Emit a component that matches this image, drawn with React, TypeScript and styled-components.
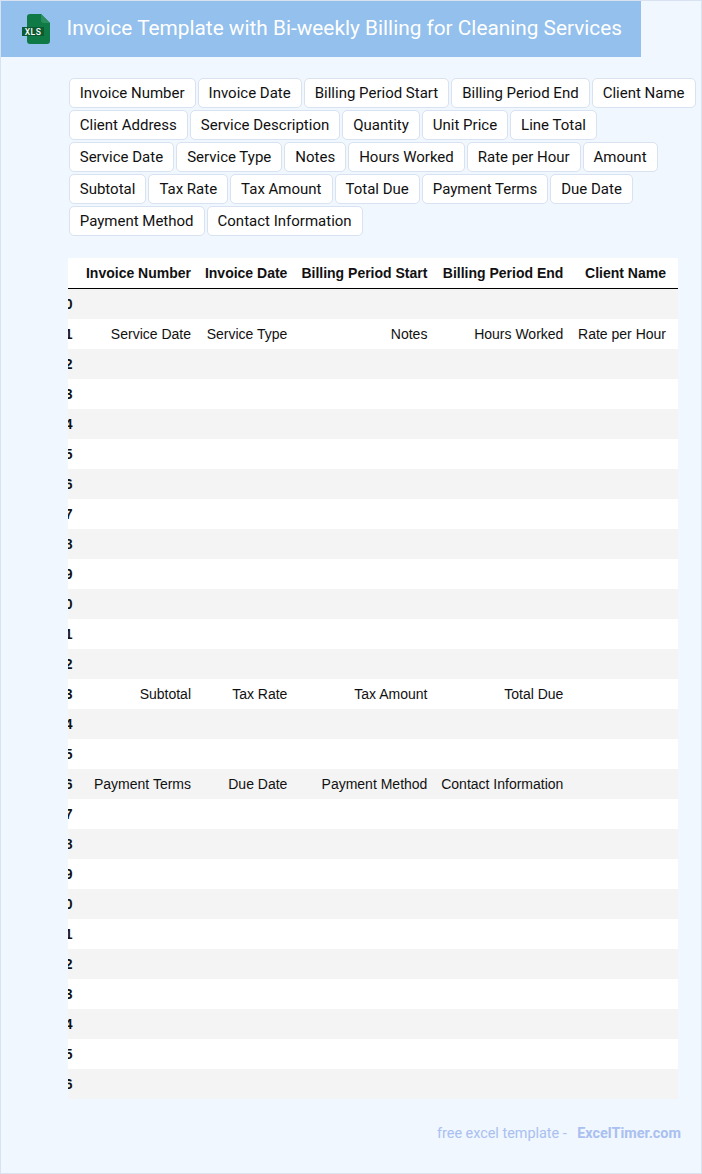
import * as React from "react";
import styled, { createGlobalStyle } from "styled-components";

const GlobalStyle = createGlobalStyle`
  html, body {
    margin: 0;
    padding: 0;
  }
  * {
    box-sizing: border-box;
  }
`;

const Page = styled.div`
  width: 702px;
  height: 1174px;
  overflow: hidden;
  background: #f0f7ff;
  border: 1px solid #d8e2f0;
  font-family: Roboto, sans-serif;
`;

const Header = styled.header`
  width: 640px;
  height: 56px;
  background: #93c0ec;
  display: flex;
  align-items: center;
  gap: 16px;
  padding-left: 20px;
`;

const Title = styled.h1`
  margin: 0 0 2px -0.5px;
  font-size: 20.8px;
  font-weight: 400;
  color: #fff;
  white-space: nowrap;
`;

const Tags = styled.div`
  display: flex;
  flex-wrap: wrap;
  gap: 2px;
  margin: 21px 0 0 67.75px;
  width: 632px;
`;

const Tag = styled.span`
  height: 30px;
  padding: 0 10px;
  display: flex;
  align-items: center;
  background: #fff;
  border: 1px solid #d8e2f0;
  border-radius: 5px;
  font-size: 15px;
  color: #111;
  white-space: nowrap;
`;

const Table = styled.div`
  width: 610px;
  margin: 22px 0 0 67px;
  font-family: "Liberation Sans", Arial, sans-serif;
  font-size: 14px;
  color: #111;
`;

const Row = styled.div<{ $head?: boolean; $shaded?: boolean }>`
  display: grid;
  grid-template-columns: 4.5px 118.5px 96.4px 140px 136px 102.6px;
  height: ${(p) => (p.$head ? "31px" : "30px")};
  align-items: center;
  background: ${(p) => (p.$shaded ? "#f4f4f4" : "#fff")};
  border-bottom: ${(p) => (p.$head ? "1px solid #000" : "none")};
  font-weight: ${(p) => (p.$head ? 700 : 400)};
`;

const Cell = styled.div`
  text-align: right;
  white-space: nowrap;
`;

const IndexCell = styled.div`
  display: flex;
  justify-content: flex-end;
  overflow: hidden;
  font-weight: 700;
`;

const Footer = styled.footer`
  display: flex;
  margin: 26px 0 0 436px;
  font-size: 14.4px;
  color: #a9c0f0;
  white-space: nowrap;
`;

const FooterBrand = styled.span`
  margin-left: 10.5px;
  font-weight: 700;
`;

const tags = [
  "Invoice Number",
  "Invoice Date",
  "Billing Period Start",
  "Billing Period End",
  "Client Name",
  "Client Address",
  "Service Description",
  "Quantity",
  "Unit Price",
  "Line Total",
  "Service Date",
  "Service Type",
  "Notes",
  "Hours Worked",
  "Rate per Hour",
  "Amount",
  "Subtotal",
  "Tax Rate",
  "Tax Amount",
  "Total Due",
  "Payment Terms",
  "Due Date",
  "Payment Method",
  "Contact Information",
];

const filled: Record<number, string[]> = {
  1: ["Service Date", "Service Type", "Notes", "Hours Worked", "Rate per Hour"],
  13: ["Subtotal", "Tax Rate", "Tax Amount", "Total Due", ""],
  16: ["Payment Terms", "Due Date", "Payment Method", "Contact Information", ""],
};

const XlsIcon = () => (
  <svg width="30" height="30" viewBox="0 0 30 30">
    <path
      d="M6 3a3 3 0 0 1 3-3h11l9 9v18a3 3 0 0 1-3 3H9a3 3 0 0 1-3-3z"
      fill="#0f7a45"
    />
    <path d="M20 0l9 9h-6a3 3 0 0 1-3-3z" fill="#2a8f5d" />
    <rect x="1" y="13" width="22" height="9" fill="#0b5a33" />
    <text
      x="12"
      y="20.8"
      textAnchor="middle"
      fontFamily="Roboto, sans-serif"
      fontSize="8.5"
      fontWeight="500"
      letterSpacing="0.5"
      fill="#fff"
    >
      XLS
    </text>
  </svg>
);

const App = () => {
  const rows = Array.from({ length: 27 }, (_, i) => i);
  return (
    <Page>
      <GlobalStyle />
      <Header>
        <XlsIcon />
        <Title>Invoice Template with Bi-weekly Billing for Cleaning Services</Title>
      </Header>
      <Tags>
        {tags.map((t) => (
          <Tag key={t}>{t}</Tag>
        ))}
      </Tags>
      <Table>
        <Row $head>
          <IndexCell />
          {tags.slice(0, 5).map((t) => (
            <Cell key={t}>{t}</Cell>
          ))}
        </Row>
        {rows.map((i) => (
          <Row key={i} $shaded={i % 2 === 0}>
            <IndexCell>{i}</IndexCell>
            {(filled[i] || ["", "", "", "", ""]).map((v, j) => (
              <Cell key={j}>{v}</Cell>
            ))}
          </Row>
        ))}
      </Table>
      <Footer>
        free excel template -<FooterBrand>ExcelTimer.com</FooterBrand>
      </Footer>
    </Page>
  );
};

export default App;
